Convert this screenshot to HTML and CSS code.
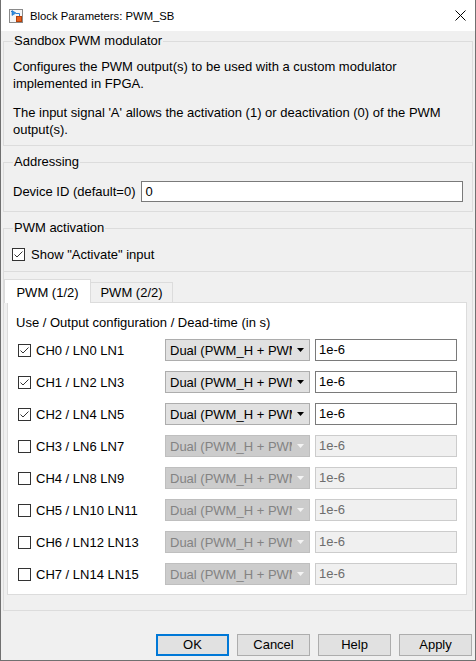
FILE: index.html
```html
<!DOCTYPE html>
<html>
<head>
<meta charset="utf-8">
<title>Block Parameters: PWM_SB</title>
<link rel="stylesheet" href="styles.css">
</head>
<body>
<div class="window">
  <div class="titlebar">
    <svg class="app-icon" width="14" height="14" viewBox="0 0 14 14">
      <rect x="0.5" y="0.5" width="13" height="13" fill="#f6f6f6" stroke="#8a8a8a"/>
      <path d="M2 2.5 H3" stroke="#2a7fd0" stroke-width="1"/>
      <polygon points="3,1.5 3,6.5 7,4" fill="#2f8fe0" stroke="#1a6cc0" stroke-width="0.6"/>
      <path d="M7 4.5 H10.5 V8" stroke="#2a7fd0" stroke-width="1" fill="none"/>
      <rect x="7.5" y="7.5" width="5" height="5" fill="#e8601c" stroke="#b2410c" stroke-width="1"/>
    </svg>
    <div class="title">Block Parameters: PWM_SB</div>
    <svg class="close" width="11" height="11" viewBox="0 0 11 11">
      <path d="M0.5 0.5 L10.5 10.5 M10.5 0.5 L0.5 10.5" stroke="#000" stroke-width="1"/>
    </svg>
  </div>

  <div class="content">
    <fieldset class="group">
      <legend>Sandbox PWM modulator</legend>
      <p>Configures the PWM output(s) to be used with a custom modulator implemented in FPGA.</p>
      <p>The input signal 'A' allows the activation (1) or deactivation (0) of the PWM output(s).</p>
    </fieldset>

    <fieldset class="group group-addr">
      <legend>Addressing</legend>
      <div class="field-row">
        <span class="field-label">Device ID (default=0)</span>
        <div class="textbox wide">0</div>
      </div>
    </fieldset>

    <fieldset class="group group-act">
      <legend>PWM activation</legend>
      <div class="check-row">
        <svg class="cb" width="13" height="13" viewBox="0 0 13 13"><rect x="0.5" y="0.5" width="12" height="12" fill="#fff" stroke="#333"/><polyline points="2.5,6.5 5,9 10.5,3.5" fill="none" stroke="#333" stroke-width="1"/></svg>
        <span>Show "Activate" input</span>
      </div>
    </fieldset>

    <div class="tabgroup">
      <div class="tabbar">
        <div class="tab active">PWM (1/2)</div>
        <div class="tab inactive">PWM (2/2)</div>
      </div>
      <div class="panel">
        <div class="panel-head">Use / Output configuration / Dead-time (in s)</div>
        <div class="rows">
          <div class="row">
            <div class="ch"><svg class="cb" width="13" height="13" viewBox="0 0 13 13"><rect x="0.5" y="0.5" width="12" height="12" fill="#fff" stroke="#333"/><polyline points="2.5,6.5 5,9 10.5,3.5" fill="none" stroke="#333" stroke-width="1"/></svg><span>CH0 / LN0 LN1</span></div>
            <div class="select"><span class="sel-text">Dual (PWM_H + PWM</span><svg class="arrow" width="7" height="4" viewBox="0 0 7 4"><polygon points="0,0 7,0 3.5,4" fill="#000"/></svg></div>
            <div class="textbox">1e-6</div>
          </div>
          <div class="row">
            <div class="ch"><svg class="cb" width="13" height="13" viewBox="0 0 13 13"><rect x="0.5" y="0.5" width="12" height="12" fill="#fff" stroke="#333"/><polyline points="2.5,6.5 5,9 10.5,3.5" fill="none" stroke="#333" stroke-width="1"/></svg><span>CH1 / LN2 LN3</span></div>
            <div class="select"><span class="sel-text">Dual (PWM_H + PWM</span><svg class="arrow" width="7" height="4" viewBox="0 0 7 4"><polygon points="0,0 7,0 3.5,4" fill="#000"/></svg></div>
            <div class="textbox">1e-6</div>
          </div>
          <div class="row">
            <div class="ch"><svg class="cb" width="13" height="13" viewBox="0 0 13 13"><rect x="0.5" y="0.5" width="12" height="12" fill="#fff" stroke="#333"/><polyline points="2.5,6.5 5,9 10.5,3.5" fill="none" stroke="#333" stroke-width="1"/></svg><span>CH2 / LN4 LN5</span></div>
            <div class="select"><span class="sel-text">Dual (PWM_H + PWM</span><svg class="arrow" width="7" height="4" viewBox="0 0 7 4"><polygon points="0,0 7,0 3.5,4" fill="#000"/></svg></div>
            <div class="textbox">1e-6</div>
          </div>
          <div class="row off">
            <div class="ch"><svg class="cb" width="13" height="13" viewBox="0 0 13 13"><rect x="0.5" y="0.5" width="12" height="12" fill="#fff" stroke="#333"/></svg><span>CH3 / LN6 LN7</span></div>
            <div class="select"><span class="sel-text">Dual (PWM_H + PWM</span><svg class="arrow" width="7" height="4" viewBox="0 0 7 4"><polygon points="0,0 7,0 3.5,4" fill="#f4f4f4"/></svg></div>
            <div class="textbox">1e-6</div>
          </div>
          <div class="row off">
            <div class="ch"><svg class="cb" width="13" height="13" viewBox="0 0 13 13"><rect x="0.5" y="0.5" width="12" height="12" fill="#fff" stroke="#333"/></svg><span>CH4 / LN8 LN9</span></div>
            <div class="select"><span class="sel-text">Dual (PWM_H + PWM</span><svg class="arrow" width="7" height="4" viewBox="0 0 7 4"><polygon points="0,0 7,0 3.5,4" fill="#f4f4f4"/></svg></div>
            <div class="textbox">1e-6</div>
          </div>
          <div class="row off">
            <div class="ch"><svg class="cb" width="13" height="13" viewBox="0 0 13 13"><rect x="0.5" y="0.5" width="12" height="12" fill="#fff" stroke="#333"/></svg><span>CH5 / LN10 LN11</span></div>
            <div class="select"><span class="sel-text">Dual (PWM_H + PWM</span><svg class="arrow" width="7" height="4" viewBox="0 0 7 4"><polygon points="0,0 7,0 3.5,4" fill="#f4f4f4"/></svg></div>
            <div class="textbox">1e-6</div>
          </div>
          <div class="row off">
            <div class="ch"><svg class="cb" width="13" height="13" viewBox="0 0 13 13"><rect x="0.5" y="0.5" width="12" height="12" fill="#fff" stroke="#333"/></svg><span>CH6 / LN12 LN13</span></div>
            <div class="select"><span class="sel-text">Dual (PWM_H + PWM</span><svg class="arrow" width="7" height="4" viewBox="0 0 7 4"><polygon points="0,0 7,0 3.5,4" fill="#f4f4f4"/></svg></div>
            <div class="textbox">1e-6</div>
          </div>
          <div class="row off">
            <div class="ch"><svg class="cb" width="13" height="13" viewBox="0 0 13 13"><rect x="0.5" y="0.5" width="12" height="12" fill="#fff" stroke="#333"/></svg><span>CH7 / LN14 LN15</span></div>
            <div class="select"><span class="sel-text">Dual (PWM_H + PWM</span><svg class="arrow" width="7" height="4" viewBox="0 0 7 4"><polygon points="0,0 7,0 3.5,4" fill="#f4f4f4"/></svg></div>
            <div class="textbox">1e-6</div>
          </div>
        </div>
      </div>
    </div>

    <div class="buttons">
      <div class="btn default">OK</div>
      <div class="btn">Cancel</div>
      <div class="btn">Help</div>
      <div class="btn">Apply</div>
    </div>
  </div>
</div>
</body>
</html>
```

FILE: styles.css
```css
* { box-sizing: border-box; }
html, body { margin: 0; padding: 0; }
body {
  font-family: "Liberation Sans", Arial, sans-serif;
  font-size: 13px;
  color: #000;
  background: #f0f0f0;
}
.window {
  width: 476px;
  height: 661px;
  border: 1px solid #707070;
  border-top: none;
  background: #f0f0f0;
  display: flex;
  flex-direction: column;
}
.titlebar {
  height: 31px;
  flex: none;
  background: #fff;
  display: flex;
  align-items: center;
  padding-left: 8px;
}
.app-icon { flex: none; margin-right: 7px; }
.title { flex: 1; font-size: 11.3px; line-height: 16px; }
.close { flex: none; margin-right: 9px; }

.content {
  flex: 1;
  display: flex;
  flex-direction: column;
  padding: 2px 2px 0 2px;
}
.group {
  margin: 0;
  min-width: 0;
  border: 1px solid #dcdcdc;
  padding: 9px 9px 7px 9px;
}
.group legend {
  padding: 0 1px;
  line-height: 16px;
  height: 16px;
}
.group p { margin: 0; line-height: 17px; }
.group p + p { margin-top: 12px; }

.group-addr { margin-top: 8px; padding-top: 11px; padding-bottom: 9px; }
.field-row { display: flex; align-items: center; gap: 6px; }
.field-label { line-height: 17px; }

.textbox {
  height: 22px;
  border: 1px solid #7a7a7a;
  background: #fff;
  padding-left: 3px;
  line-height: 20px;
  white-space: nowrap;
}
.textbox.wide { flex: 1; height: 21px; line-height: 19px; }

.group-act { margin-top: 8px; padding-top: 10px; padding-bottom: 8px; }
.check-row { display: flex; align-items: center; gap: 6px; height: 17px; margin-left: -1px; }
.cb { flex: none; display: block; }

.tabgroup {
  border: 1px solid #dcdcdc;
  border-top: none;
  padding: 7px 5px 15px 0;
}
.tabbar {
  display: flex;
  align-items: flex-end;
  height: 24px;
  margin-bottom: -1px;
  position: relative;
  z-index: 1;
}
.tab {
  border: 1px solid #dcdcdc;
  border-bottom: none;
  text-align: center;
  line-height: 17px;
  white-space: nowrap;
}
.tab.active {
  width: 87px;
  height: 24px;
  background: #fff;
  padding-top: 4px;
}
.tab.inactive {
  width: 83px;
  height: 20px;
  margin-left: -1px;
  margin-bottom: 1px;
  background: #f0f0f0;
  padding-top: 1px;
}
.panel {
  margin-left: 3px;
  border: 1px solid #dcdcdc;
  background: #fff;
  padding: 11px 9px 9px 8px;
}
.panel-head { line-height: 17px; }
.rows {
  margin-top: 8px;
  margin-left: 2px;
  display: flex;
  flex-direction: column;
  gap: 10px;
}
.row {
  display: grid;
  grid-template-columns: 142px 145px 142px;
  column-gap: 5px;
  height: 22px;
  align-items: center;
}
.ch { display: flex; align-items: center; gap: 5px; line-height: 17px; white-space: nowrap; }

.select {
  height: 22px;
  border: 1px solid #adadad;
  background: #e1e1e1;
  display: flex;
  align-items: center;
  padding: 0 5px 0 4px;
}
.sel-text {
  width: 122px;
  overflow: hidden;
  white-space: nowrap;
  line-height: 17px;
}
.arrow { flex: none; margin-left: 5px; display: block; }

.row.off .select { background: #cccccc; border-color: #bfbfbf; color: #838383; }
.row.off .textbox { background: #f0f0f0; border-color: #cccccc; color: #6d6d6d; }

.buttons {
  display: flex;
  justify-content: flex-end;
  gap: 8px;
  margin-top: 23px;
  padding-right: 1px;
}
.btn {
  width: 73px;
  height: 22px;
  border: 1px solid #adadad;
  background: #e1e1e1;
  text-align: center;
  line-height: 20px;
}
.btn.default {
  border: 2px solid #0078d7;
  line-height: 18px;
}
```
